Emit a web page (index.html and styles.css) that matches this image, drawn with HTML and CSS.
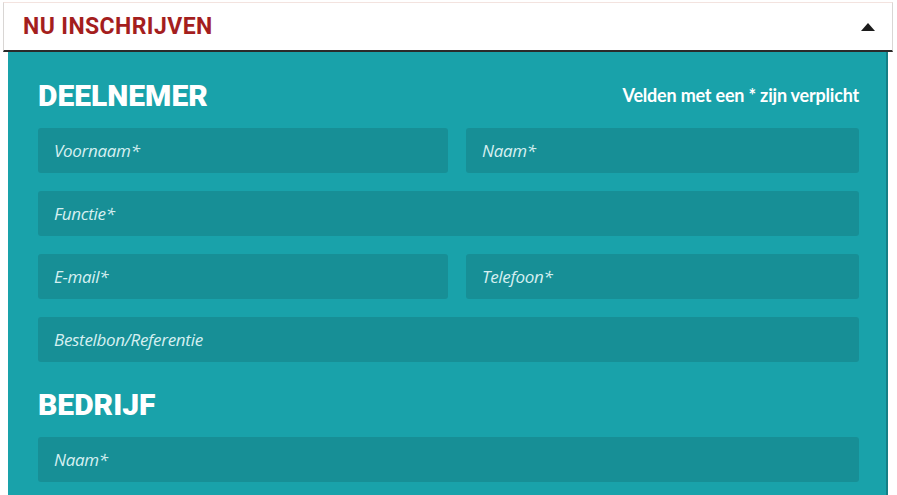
FILE: index.html
```html
<!DOCTYPE html>
<html lang="nl">
<head>
<meta charset="utf-8">
<title>Nu inschrijven</title>
<link rel="stylesheet" href="styles.css">
</head>
<body>
<div class="signup">
  <div class="signup-bar">
    <h2 class="signup-title">NU INSCHRIJVEN</h2>
    <span class="caret" aria-hidden="true"></span>
  </div>
  <form class="signup-panel">
    <div class="section-head">
      <h3 class="section-title">DEELNEMER</h3>
      <p class="required-note">Velden met een * zijn verplicht</p>
    </div>
    <div class="fields">
      <input class="field" type="text" placeholder="Voornaam*">
      <input class="field" type="text" placeholder="Naam*">
      <input class="field wide" type="text" placeholder="Functie*">
      <input class="field" type="email" placeholder="E-mail*">
      <input class="field" type="tel" placeholder="Telefoon*">
      <input class="field wide" type="text" placeholder="Bestelbon/Referentie">
    </div>
    <div class="section-head">
      <h3 class="section-title">BEDRIJF</h3>
    </div>
    <div class="fields last">
      <input class="field wide" type="text" placeholder="Naam*">
    </div>
  </form>
</div>
</body>
</html>
```
FILE: styles.css
```css
html, body {
  margin: 0;
  background: #ffffff;
  height: 100%;
  overflow: hidden;
}

.signup {
  padding: 2px 4px 0 3px;
}

.signup-bar {
  display: flex;
  align-items: center;
  justify-content: space-between;
  height: 47px;
  padding: 0 17px 0 19px;
  border: 1px solid #d9d6d4;
  border-top-color: #f3e3df;
  border-bottom: 2px solid #2b2b2b;
  background: #ffffff;
}

.signup-title {
  margin: 0;
  font-family: Roboto, "Liberation Sans", sans-serif;
  font-weight: 700;
  font-size: 23px;
  letter-spacing: 0.4px;
  color: #a41e1e;
}

.caret {
  width: 0;
  height: 0;
  border-left: 7px solid transparent;
  border-right: 7px solid transparent;
  border-bottom: 8px solid #1c1c1c;
}

.signup-panel {
  margin: 0 5px;
  padding: 24px 27px 13px 30px;
  background: #19a2aa;
  border-right: 2px solid #147f86;
}

.section-head {
  display: flex;
  align-items: center;
  justify-content: space-between;
  height: 40px;
  margin-bottom: 12px;
}

.section-title {
  margin: 0;
  font-family: Roboto, "Liberation Sans", sans-serif;
  font-weight: 900;
  font-size: 30px;
  line-height: 36px;
  color: #ffffff;
}

.required-note {
  margin: 0 0 2px;
  font-family: Lato, "Liberation Sans", sans-serif;
  font-weight: 700;
  font-size: 18px;
  color: #ffffff;
  letter-spacing: -0.2px;
}

.fields {
  display: grid;
  grid-template-columns: 410px 1fr;
  column-gap: 18px;
  row-gap: 18px;
  margin-bottom: 23px;
}

.fields.last {
  margin-bottom: 0;
}

.field {
  height: 45px;
  box-sizing: border-box;
  padding: 0 16px;
  border: 0;
  border-radius: 3px;
  background: #178f96;
  font-family: "Open Sans", "Liberation Sans", sans-serif;
  font-style: italic;
  font-size: 17px;
  letter-spacing: -0.3px;
  color: #ffffff;
  outline: none;
}

.field::placeholder {
  color: #d6eff1;
  opacity: 1;
}

.wide {
  grid-column: 1 / -1;
}
```
